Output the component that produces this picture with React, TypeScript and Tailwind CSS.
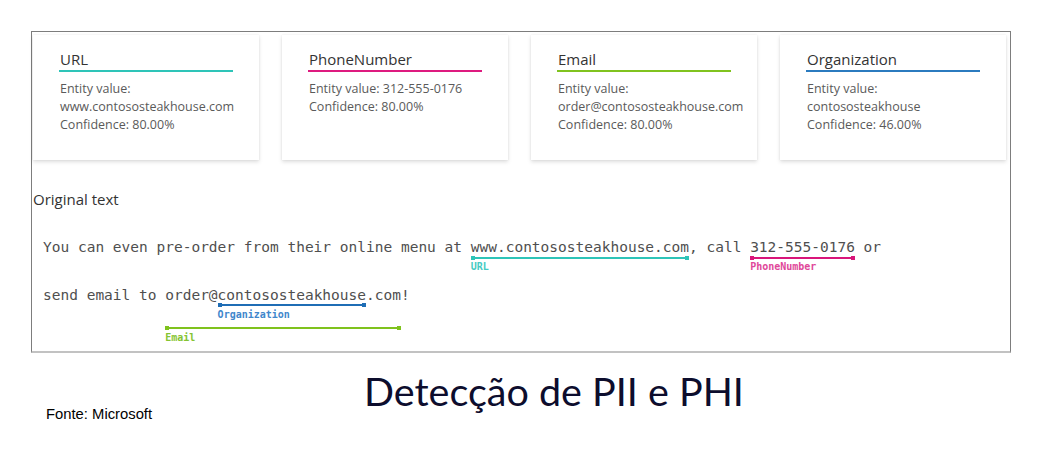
import React from "react"

const cards = [
  { title: "URL", color: "bg-[#2ec4b8]", lines: ["Entity value:", "www.contososteakhouse.com", "Confidence: 80.00%"] },
  { title: "PhoneNumber", color: "bg-[#de1a7f]", lines: ["Entity value: 312-555-0176", "Confidence: 80.00%"] },
  { title: "Email", color: "bg-[#80c31f]", lines: ["Entity value:", "order@contososteakhouse.com", "Confidence: 80.00%"] },
  { title: "Organization", color: "bg-[#2b7bbf]", lines: ["Entity value:", "contososteakhouse", "Confidence: 46.00%"] },
]

function Mark({
  line,
  label,
  labelColor,
  lineTop,
  labelTop,
}: {
  line: string
  label: string
  labelColor: string
  lineTop: string
  labelTop: string
}) {
  return (
    <>
      <span className={`absolute left-0 right-0 h-[2px] ${lineTop} ${line}`}>
        <span className={`absolute left-0 top-[-1px] w-[4px] h-[4px] ${line}`} />
        <span className={`absolute right-0 top-[-1px] w-[4px] h-[4px] ${line}`} />
      </span>
      <span className={`absolute left-0 text-[10px] leading-[12px] font-semibold whitespace-nowrap ${labelTop} ${labelColor}`}>
        {label}
      </span>
    </>
  )
}

export default function App() {
  return (
    <div className="w-[1046px] h-[454px] bg-white overflow-hidden">
      <div className="pt-[31px] pl-[31px]">
        <div className="w-[980px] h-[322px] border border-[#7d7d7d] border-b-2 border-b-[#c2c2c2] pt-[3px] pl-[1px]">
          {/* entity cards */}
          <div className="flex gap-[23px] font-['Open_Sans',sans-serif]">
            {cards.map((c) => (
              <div
                key={c.title}
                className="w-[226px] h-[125px] bg-white shadow-[0_2px_4px_rgba(0,0,0,0.13),0_0_2px_rgba(0,0,0,0.07)] pt-[14px] px-[26px]"
              >
                <div className="text-[15px] leading-[20px] text-[#333] pl-[1px]">{c.title}</div>
                <div className={`mt-[1px] h-[2px] ${c.color}`} />
                <div className="mt-[8px] text-[12.5px] leading-[18px] text-[#5a5a5a] pl-[1px]">
                  {c.lines.map((l) => (
                    <div key={l}>{l}</div>
                  ))}
                </div>
              </div>
            ))}
          </div>

          <div className="mt-[29px] text-[15px] leading-[20px] font-medium text-[#333] font-['Open_Sans',sans-serif]">
            Original text
          </div>

          {/* annotated text */}
          <div className="mt-[14px] pl-[10px] font-['DejaVu_Sans_Mono',monospace] text-[14.5px] leading-[48px] text-[#4f4f4f] whitespace-pre">
            <div>
              {"You can even pre-order from their online menu at "}
              <span className="relative inline-block">
                www.contososteakhouse.com
                <Mark line="bg-[#2ec4b8]" label="URL" labelColor="text-[#45cbc3]" lineTop="top-[34px]" labelTop="top-[38px]" />
              </span>
              {", call "}
              <span className="relative inline-block">
                312-555-0176
                <Mark line="bg-[#d9157a]" label="PhoneNumber" labelColor="text-[#e0479a]" lineTop="top-[34px]" labelTop="top-[38px]" />
              </span>
              {" or"}
            </div>
            <div>
              {"send email to "}
              <span className="relative inline-block">
                {"order@"}
                <span className="relative inline-block">
                  contososteakhouse
                  <Mark line="bg-[#1f6db5]" label="Organization" labelColor="text-[#3f87cc]" lineTop="top-[33px]" labelTop="top-[38px]" />
                </span>
                .com
                <Mark line="bg-[#7fc21d]" label="Email" labelColor="text-[#85c432]" lineTop="top-[56px]" labelTop="top-[61px]" />
              </span>
              !
            </div>
          </div>
        </div>
      </div>

      <div className="mt-[16px] flex">
        <div className="w-[364px] pl-[46px] pt-[37px] font-['Liberation_Sans',Arial,sans-serif] text-[14.8px] leading-[17px] text-black">
          Fonte: Microsoft
        </div>
        <div className="font-['Lato',sans-serif] text-[39.5px] leading-[44px] text-[#0d0d2d]">
          Detecção de PII e PHI
        </div>
      </div>
    </div>
  )
}
